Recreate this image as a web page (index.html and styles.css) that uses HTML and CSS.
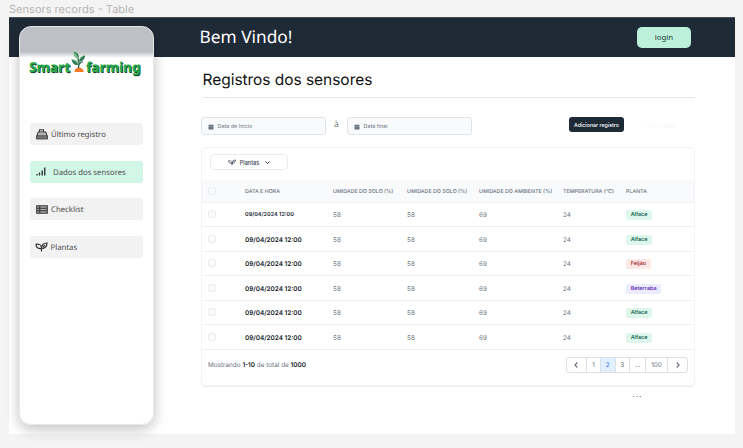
FILE: index.html
```html
<!DOCTYPE html>
<html lang="pt-BR">
<head>
<meta charset="utf-8">
<title>Smart farming</title>
<link rel="stylesheet" href="styles.css">
</head>
<body>
<svg width="0" height="0" class="defs">
  <symbol id="calendar" viewBox="0 0 12 12"><path d="M1 2h10v2.3H1zM1 5.2h10V11H1zM3 .5h1.6V3H3zM7.4.5H9V3H7.4z" fill="currentColor"/></symbol>
  <symbol id="sprout" viewBox="0 0 26 20"><path d="M13 19v-7M13 13C6 14 2 10.500 2 4.500c2-1 4 .5 5 0 3.500.5 6 3.500 6 8.500M13 13c0-7 4-11 11-11 0 7-4 11-11 11m3-3 4-4" fill="none" stroke="currentColor" stroke-width="2.400"/></symbol>
</svg>
<div class="caption">Sensors records - Table</div>
<div class="frame">
  <header class="topbar">
    <h1>Bem Vindo!</h1>
    <button class="login">login</button>
  </header>
  <aside class="sidebar">
    <div class="logo">
      <span class="smart">Smart</span>
      <svg class="plant" width="15" height="22" viewBox="0 0 15 22">
        <path d="M3.500 21c0-3 2-4.500 4.300-4.500S12.500 18 12.800 21z" fill="#f47b2a"/>
        <path d="M7.500 17c.8-3 .5-7-.7-10M7.800 14c1-2 2.500-3 4-3.500" fill="none" stroke="#275e4b" stroke-width="1.300"/>
        <path d="M7.300 8C3.500 7 2 4 2.500.8 6.500 1.500 8.500 4 7.300 8z" fill="#75bd83"/>
        <path d="M7.300 8C7 5 5 2.500 2.500.8 6.500 1.500 8.500 4 7.300 8z" fill="#2e7659"/>
        <path d="M7.700 14C4 14.500 1 12 .6 8.500c4-.2 6.700 1.500 7.100 5.500z" fill="#75bd83"/>
        <path d="M7.700 14C6 12 3.500 9.500.6 8.500 2 13 4 14.500 7.700 14z" fill="#2e7659"/>
        <path d="M8 10.500c-.3-3.500 2.300-6 6-6-.3 3.500-2.300 6-6 6z" fill="#75bd83"/>
        <path d="M8 10.500c1-3 3.500-5 6-6-.3 3.500-2.300 6-6 6z" fill="#2e7659"/>
      </svg>
      <span class="farming">farming</span>
    </div>
    <nav>
      <a class="item"><svg width="12" height="11" viewBox="0 0 24 22"><path d="M7 6V1.500h8V6M2 14 4.500 6h15L22 14" fill="#ddd" stroke="#333" stroke-width="2.200"/><path d="M1 13.500h22V20H1z" fill="#777" stroke="#333" stroke-width="1.600"/><path d="M7 10h2m2 0h2m2 0h2" stroke="#333" stroke-width="2"/></svg><span>Último registro</span></a>
      <a class="item active"><svg width="10" height="9" viewBox="0 0 20 18"><path d="M2 14v3M7 11v6M12.500 7v10M17.500 1v16" stroke="#333" stroke-width="2.800"/></svg><span>Dados dos sensores</span></a>
      <a class="item"><svg width="12" height="9" viewBox="0 0 24 18"><path d="M1.500 1.500h21v15h-21zM1 6.500h22M1 11.500h22M7.500 2v14" fill="#aaa" stroke="#333" stroke-width="2.200"/></svg><span>Checklist</span></a>
      <a class="item sprout"><svg width="13" height="10"><use href="#sprout"/></svg><span>Plantas</span></a>
    </nav>
  </aside>
  <main>
    <h2>Registros dos sensores</h2>
    <div class="filters">
      <div class="date"><svg width="6" height="6"><use href="#calendar"/></svg>Data de Início</div>
      <span class="to">à</span>
      <div class="date"><svg width="6" height="6"><use href="#calendar"/></svg>Data final</div>
      <button class="add">Adicionar registro</button>
      <span class="ghost">Add Data</span>
    </div>
    <section class="card">
      <div class="tools"><button class="pick"><svg width="8" height="7"><use href="#sprout"/></svg>Plantas<svg width="5" height="3" viewBox="0 0 10 6"><path d="m1 1 4 4 4-4" fill="none" stroke="currentColor" stroke-width="2"/></svg></button></div>
      <div class="row head"><i class="box"></i><span>DATA E HORA</span><span>UMIDADE DO SOLO (%)</span><span>UMIDADE DO SOLO (%)</span><span>UMIDADE DO AMBIENTE (%)</span><span>TEMPERATURA (°C)</span><span>PLANTA</span></div>
      <div class="row first"><i class="box"></i><b>09/04/2024 12:00</b><span>58</span><span>58</span><span>69</span><span>24</span><em class="tag green">Alface</em></div>
      <div class="row"><i class="box"></i><b>09/04/2024 12:00</b><span>58</span><span>58</span><span>69</span><span>24</span><em class="tag green">Alface</em></div>
      <div class="row"><i class="box"></i><b>09/04/2024 12:00</b><span>58</span><span>58</span><span>69</span><span>24</span><em class="tag red">Feijão</em></div>
      <div class="row"><i class="box"></i><b>09/04/2024 12:00</b><span>58</span><span>58</span><span>69</span><span>24</span><em class="tag purple">Beterraba</em></div>
      <div class="row"><i class="box"></i><b>09/04/2024 12:00</b><span>58</span><span>58</span><span>69</span><span>24</span><em class="tag green">Alface</em></div>
      <div class="row"><i class="box"></i><b>09/04/2024 12:00</b><span>58</span><span>58</span><span>69</span><span>24</span><em class="tag green">Alface</em></div>
      <div class="foot">
        <p>Mostrando <b>1-10</b> de total de <b>1000</b></p>
        <div class="pages">
          <span><svg width="4" height="6" viewBox="0 0 8 12"><path d="M6.500 1 2 6l4.500 5" fill="none" stroke="currentColor" stroke-width="2.400"/></svg></span><span>1</span><span class="current">2</span><span>3</span><span>...</span><span>100</span><span><svg width="4" height="6" viewBox="0 0 8 12"><path d="m1.500 1 4.500 5-4.500 5" fill="none" stroke="currentColor" stroke-width="2.400"/></svg></span>
        </div>
      </div>
    </section>
    <div class="more">...</div>
  </main>
</div>
</body>
</html>
```
FILE: styles.css
```css
* { box-sizing: border-box; }
body { margin: 0; width: 743px; height: 448px; overflow: hidden; background: #f4f4f4; font-family: Inter, sans-serif; color: #6b7280; text-rendering: geometricPrecision; }
h1, h2, p { margin: 0; font-weight: 400; }
button { border: 0; padding: 0; font-family: inherit; }
.defs { display: block; }
.caption { height: 17px; padding-left: 9px; font-size: 11.050px; line-height: 18px; color: #b5b5b5; white-space: nowrap; }
.frame { display: grid; grid-template: 39.500px 377.500px / 192px 533.500px; width: 725.500px; height: 417px; margin-left: 9px; background: #fff; }
.topbar { grid-area: 1 / 1 / 2 / 3; display: flex; align-items: center; justify-content: space-between; padding: 0 43.500px 0 190.500px; background: #1f2a37; border-top: .5px solid #454f5b; }
h1 { padding-top: 1px; font: 400 17.300px/26px "Noto Sans", sans-serif; color: #fff; }
.login { width: 54px; height: 21px; border-radius: 5px; background: #bcf0da; color: #1f3b38; font: 400 7.800px/19px "Noto Sans", sans-serif; }
.sidebar { grid-area: 1 / 1 / 3 / 2; z-index: 1; width: 135px; height: 399px; margin: 9px 0 0 10px; border: 1px solid #e8e8e8; border-radius: 12px; background: linear-gradient(#bdc1c6 0 25px, #fff 31px); box-shadow: 0 4px 14px rgba(0, 0, 0, .25); }
.logo { display: flex; height: 28px; margin: 22px 0 0 9px; align-items: flex-start; font: 800 13.600px/20px "Noto Sans", sans-serif; color: #27a84a; text-shadow: .8px .8px 0 #14442a; }
.smart, .farming { width: 42px; padding-top: 8px; letter-spacing: -.1px; }
.plant { flex: none; margin: 2px 0 0 0; }
nav { display: grid; gap: 15.500px; margin: 46.300px 10.500px 0 10px; }
.item { display: flex; align-items: center; height: 22px; padding-left: 6px; border-radius: 3px; background: #f2f2f2; color: #4c4c4c; font: 400 7.750px/22px "Noto Sans", sans-serif; }
.item svg { flex: none; color: #333; }
.item span { margin-left: 3px; padding-top: 2px; white-space: nowrap; }
.item.sprout { padding-left: 5px; }
.item.sprout span { margin-left: 2.500px; }
.item.active { background: #d2f7e9; }
.item.active span { margin-left: 7px; }
main { grid-area: 2 / 2; padding-right: 40px; }
h2 { height: 41.500px; margin-left: 1.500px; border-bottom: 1px solid #e8e8e8; font-size: 15.500px; line-height: 45px; letter-spacing: -.04px; color: #111; }
.filters { display: flex; margin-top: 19px; height: 18px; }
.date { display: flex; align-items: center; gap: 3.500px; width: 125px; height: 18px; padding: 1px 0 0 6px; border: 1px solid #e0e3e8; border-radius: 3px; background: #f9fafb; font-size: 5.400px; }
.to { width: 21px; text-align: center; font: 400 8.500px/16px "Noto Sans", sans-serif; }
.add { width: 55px; height: 14.500px; padding-top: 1px; margin-left: 97px; border-radius: 3px; background: #1f2a37; color: #fff; font-size: 5.300px; font-weight: 500; }
.ghost { margin-left: 23px; color: #f8f8f8; font-size: 6.500px; line-height: 18px; }
.card { height: 239px; margin-top: 11.500px; border: 1px solid #f3f3f5; border-radius: 4px; box-shadow: 0 1px 1px rgba(0, 0, 0, .07); overflow: hidden; }
.tools { height: 32px; padding: 6.500px 0 0 8px; }
.pick { display: flex; align-items: center; justify-content: center; gap: 3.500px; width: 78px; height: 16px; padding-top: 1px; border: 1px solid #e8eaee; border-radius: 4px; background: #fff; color: #374151; font-size: 5.500px; font-weight: 500; }
.pick svg:last-child { margin-left: 2px; }
.row { display: grid; grid-template-columns: 37px 88px 74px 72px 84px 63px 1fr; align-items: center; height: 24.550px; padding-left: 6px; border-bottom: 1px solid #eff0f2; font-size: 6.400px; white-space: nowrap; }
.row > span, .row > b { padding-top: 2px; }
.row b { font-weight: 600; color: #111928; }
.row.first b { font-size: 5.500px; }
.row.head { height: 23px; background: #f9fafb; font-size: 5.300px; font-weight: 500; }
.box { width: 8px; height: 8px; border: 1px solid #eceef0; border-radius: 2px; background: #f9fafb; }
.tag { justify-self: start; height: 10px; margin-top: 2px; padding: 1px 4.700px 0; border-radius: 2px; font: 500 5.500px/9px Inter, sans-serif; }
.green { background: #def7ec; color: #03543f; }
.red { background: #fde8e8; color: #9b1c1c; }
.purple { background: #edebfe; color: #5521b5; }
.foot { display: flex; justify-content: space-between; padding: 7px 5.500px 0 6px; font-size: 6.400px; }
.foot p { line-height: 17px; }
.foot b { font-weight: 600; color: #111928; }
.pages { display: grid; grid-template-columns: 20.500px 14px 14.500px 14.500px 16px 22px 19px; height: 16px; border: 1px solid #dcdfe4; border-radius: 3px; overflow: hidden; }
.pages span { display: flex; align-items: center; justify-content: center; padding-top: 1px; border-right: 1px solid #dcdfe4; }
.pages span:last-child { border-right: 0; }
.pages .current { background: #e1effe; color: #1c64f2; }
.more { margin: 3px 52px 0 0; text-align: right; font-size: 9px; line-height: 11px; letter-spacing: .8px; }
```
